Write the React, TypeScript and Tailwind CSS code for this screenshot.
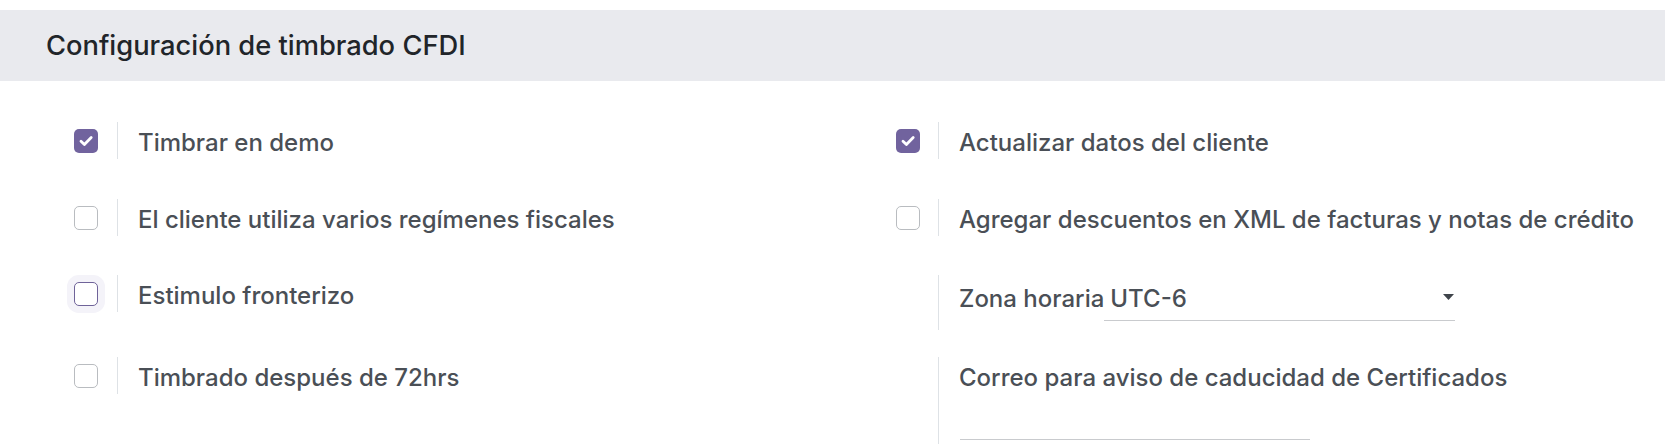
import React from "react";

const FONT = "font-['Inter','Noto_Sans',sans-serif]";

function Check({ checked, focused }: { checked?: boolean; focused?: boolean }) {
  if (checked) {
    return (
      <div className="w-[24px] h-[24px] rounded-[5px] bg-[#71639e] flex items-center justify-center">
        <svg width="24" height="24" viewBox="0 0 24 24">
          <path d="M7 12.3 L10.4 15.6 L17.2 8.6" fill="none" stroke="#ffffff" strokeWidth="2.8" strokeLinecap="round" strokeLinejoin="round" />
        </svg>
      </div>
    );
  }
  if (focused) {
    return (
      <div className="w-[24px] h-[24px] rounded-[5px] bg-white border-[1.5px] border-[#6f6399] shadow-[0_0_0_7px_#f4f3f9]" />
    );
  }
  return <div className="w-[24px] h-[24px] rounded-[5px] bg-white border border-[#b9bcc0]" />;
}

function CheckSetting({ label, checked, focused, gap }: { label: string; checked?: boolean; focused?: boolean; gap: string }) {
  return (
    <div className="flex items-start">
      <div className="ml-[22px] mt-[7px]">
        <Check checked={checked} focused={focused} />
      </div>
      <div className={`${gap} border-l border-[#dee2e6] pl-[20px] h-[37px] pt-[4px] leading-[33px] whitespace-nowrap`}>
        {label}
      </div>
    </div>
  );
}

export default function App() {
  return (
    <div className={`w-[1665px] h-[444px] bg-white overflow-hidden ${FONT}`}>
      <div className="mt-[10px] h-[71px] bg-[#e9eaee] flex items-center pt-[2px] pl-[46px] text-[27.3px] font-medium text-[#212529]">
        Configuración de timbrado CFDI
      </div>
      <div className="text-[24px] font-medium text-[#4a4f56]">
        <div className="mt-[41px] flex">
          <div className="w-[874px] pl-[52px]">
            <CheckSetting label="Timbrar en demo" checked gap="ml-[19px]" />
          </div>
          <div className="flex-1">
            <CheckSetting label="Actualizar datos del cliente" checked gap="ml-[18px]" />
          </div>
        </div>
        <div className="mt-[40px] flex">
          <div className="w-[874px] pl-[52px]">
            <CheckSetting label="El cliente utiliza varios regímenes fiscales" gap="ml-[19px]" />
          </div>
          <div className="flex-1">
            <CheckSetting label="Agregar descuentos en XML de facturas y notas de crédito" gap="ml-[18px]" />
          </div>
        </div>
        <div className="mt-[39px] flex items-start">
          <div className="w-[874px] pl-[52px]">
            <CheckSetting label="Estimulo fronterizo" focused gap="ml-[19px]" />
          </div>
          <div className="flex-1">
            <div className="ml-[64px] border-l border-[#dee2e6] pl-[20px] h-[55px] pt-[3px]">
              <div className="flex items-start">
                <span className="pt-[4px] leading-[33px] whitespace-nowrap">Zona horaria</span>
                <div className="w-[351px] h-[43px] border-b border-[#c9cbce] flex items-start justify-between pl-[6px] pr-[1px]">
                  <span className="pt-[4px] leading-[33px]">UTC-6</span>
                  <svg className="mt-[16px]" width="11" height="6" viewBox="0 0 11 6">
                    <path d="M0 0 L11 0 L5.5 6 Z" fill="#3f444b" />
                  </svg>
                </div>
              </div>
            </div>
          </div>
        </div>
        <div className="mt-[27px] flex items-start">
          <div className="w-[874px] pl-[52px]">
            <CheckSetting label="Timbrado después de 72hrs" gap="ml-[19px]" />
          </div>
          <div className="flex-1">
            <div className="ml-[64px] border-l border-[#dee2e6] pl-[20px] h-[100px]">
              <div className="pt-[4px] leading-[33px] whitespace-nowrap">Correo para aviso de caducidad de Certificados</div>
              <div className="ml-[1px] w-[350px] h-[46px] border-b border-[#c9cbce]" />
            </div>
          </div>
        </div>
      </div>
    </div>
  );
}
